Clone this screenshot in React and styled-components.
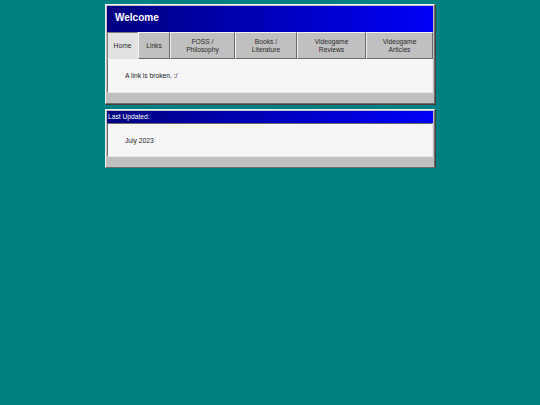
import React from "react";
import styled, { createGlobalStyle } from "styled-components";

const Global = createGlobalStyle`
  html, body { margin: 0; padding: 0; background: #008080; }
  body { font-family: "Liberation Sans", Arial, sans-serif; }
`;

const Page = styled.div`
  display: flex;
  flex-direction: column;
  align-items: center;
  gap: 5px;
  padding-top: 4px;
`;

const Panel = styled.div`
  width: 326px;
  background: #c0c0c0;
  border: 1px solid;
  border-color: #e8f4f4 #6e6e6e #6e6e6e #e8f4f4;
  padding: 1px 1px 0 1px;
  box-shadow: 1px 1px 0 #404040;
  display: flex;
  flex-direction: column;
`;

const Header = styled.div`
  background: linear-gradient(to right, #000080, #0000f8);
  color: #fff;
  font-weight: ${(p) => (p.$big ? "bold" : "normal")};
  font-size: ${(p) => (p.$big ? "10px" : "6.7px")};
  height: ${(p) => (p.$big ? "26px" : "12px")};
  line-height: ${(p) => (p.$big ? "23px" : "12px")};
  padding-left: ${(p) => (p.$big ? "8px" : "1px")};
`;

const Tabs = styled.div`
  display: grid;
  grid-template-columns: 31px 32px 65px 62px 69px 1fr;
  height: 27px;
`;

const Tab = styled.div`
  display: flex;
  align-items: center;
  justify-content: center;
  text-align: center;
  font-size: 6.7px;
  line-height: 8px;
  color: #2a2a2a;
  background: ${(p) => (p.$active ? "#e2e2e2" : "#c0c0c0")};
  border: 1px solid;
  border-color: ${(p) =>
    p.$active
      ? "#7a7a7a #e8e8e8 #e2e2e2 #7a7a7a"
      : "#f0f0f0 #6a6a6a #6a6a6a #f0f0f0"};
  box-sizing: border-box;
`;

const Content = styled.div`
  background: #f6f6f6;
  border-left: 1px solid #6a6a6a;
  border-right: 1px solid #e8e8e8;
  border-bottom: 1px solid #e8e8e8;
  border-top: ${(p) => (p.$top ? "1px solid #6a6a6a" : "none")};
  height: ${(p) => p.$h}px;
  box-sizing: border-box;
  display: flex;
  align-items: center;
  padding-left: 17px;
  font-size: 6.7px;
  color: #222;
`;

const Footer = styled.div`
  height: 10px;
`;

export default function App() {
  const tabs = [
    ["Home"],
    ["Links"],
    ["FOSS /", "Philosophy"],
    ["Books /", "Literature"],
    ["Videogame", "Reviews"],
    ["Videogame", "Articles"],
  ];
  return (
    <>
      <Global />
      <Page>
        <Panel>
          <Header $big>Welcome</Header>
          <Tabs>
            {tabs.map((t, i) => (
              <Tab key={i} $active={i === 0}>
                <span>
                  {t.map((l, j) => (
                    <React.Fragment key={j}>
                      {j > 0 && <br />}
                      {l}
                    </React.Fragment>
                  ))}
                </span>
              </Tab>
            ))}
          </Tabs>
          <Content $h={34}>A link is broken. :/</Content>
          <Footer />
        </Panel>
        <Panel>
          <Header>Last Updated:</Header>
          <Content $top $h={34}>July 2023</Content>
          <Footer />
        </Panel>
      </Page>
    </>
  );
}
